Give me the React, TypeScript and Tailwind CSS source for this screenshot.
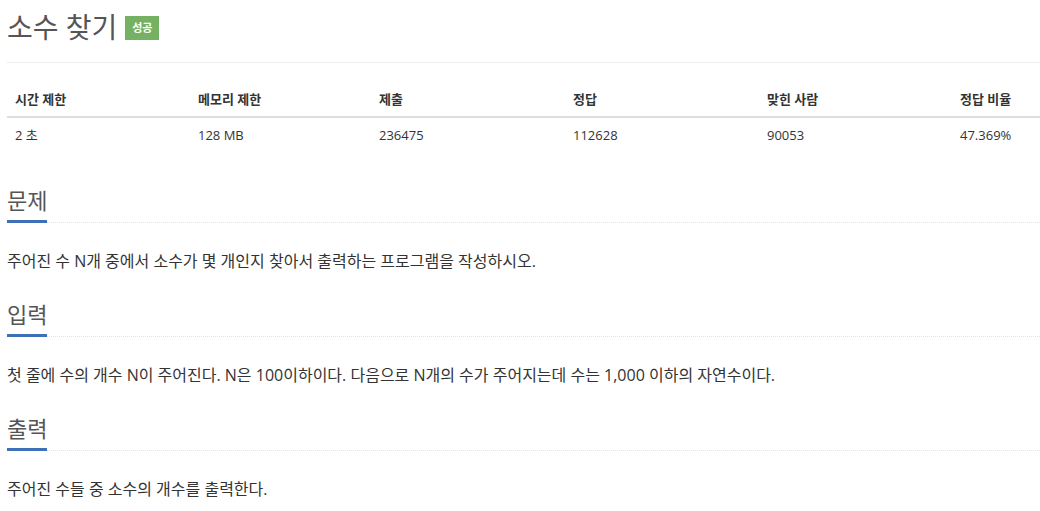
const font = { fontFamily: '"Open Sans", "Noto Sans CJK KR", sans-serif' };

const stats = [
  { label: '시간 제한', value: '2 초', w: 'w-[183px]' },
  { label: '메모리 제한', value: '128 MB', w: 'w-[181px]' },
  { label: '제출', value: '236475', w: 'w-[194px]' },
  { label: '정답', value: '112628', w: 'w-[194px]' },
  { label: '맞힌 사람', value: '90053', w: 'w-[193px]' },
  { label: '정답 비율', value: '47.369%', w: 'flex-1' },
];

const sections = [
  { title: '문제', body: '주어진 수 N개 중에서 소수가 몇 개인지 찾아서 출력하는 프로그램을 작성하시오.' },
  { title: '입력', body: '첫 줄에 수의 개수 N이 주어진다. N은 100이하이다. 다음으로 N개의 수가 주어지는데 수는 1,000 이하의 자연수이다.' },
  { title: '출력', body: '주어진 수들 중 소수의 개수를 출력한다.' },
];

function Section({ title, body }: { title: string; body: string }) {
  return (
    <section className="mt-[25px]">
      <h2 className="text-[22px] leading-[34px] text-[#555] whitespace-nowrap">{title}</h2>
      {/* underline: blue accent + dotted rule */}
      <div className="mt-[3px] flex items-end h-[3px]">
        <div className="w-[40px] h-[3px] bg-[#3e70b8]" />
        <div className="flex-1 border-b border-dotted border-[#e2e2e2]" />
      </div>
      <p className="mt-[27px] text-[16px] leading-[22px] text-[#333]">{body}</p>
    </section>
  );
}

export default function App() {
  return (
    <div className="bg-white min-h-screen pl-[7px]" style={font}>
      {/* Title */}
      <div className="flex items-center pt-[4px] pb-[12px] border-b border-[#eee]">
        <h1 className="text-[28px] leading-[46px] text-[#555]">소수 찾기</h1>
        <span className="ml-[8px] mt-[2px] h-[24px] w-[34px] flex items-center justify-center bg-[#74b163] text-white text-[11px] font-bold">
          성공
        </span>
      </div>

      {/* Stats table */}
      <div className="mt-[20px]">
        <div className="flex border-b-2 border-[#ddd] h-[35px] items-center">
          {stats.map((s) => (
            <div key={s.label} className={`${s.w} px-[8px] text-[13px] font-bold text-[#333]`}>
              {s.label}
            </div>
          ))}
        </div>
        <div className="flex h-[36px] items-center">
          {stats.map((s) => (
            <div key={s.label} className={`${s.w} px-[8px] text-[13px] text-[#333]`}>
              {s.value}
            </div>
          ))}
        </div>
      </div>

      <div className="pt-[4px]">
        {sections.map((s) => (
          <Section key={s.title} title={s.title} body={s.body} />
        ))}
      </div>
    </div>
  );
}
